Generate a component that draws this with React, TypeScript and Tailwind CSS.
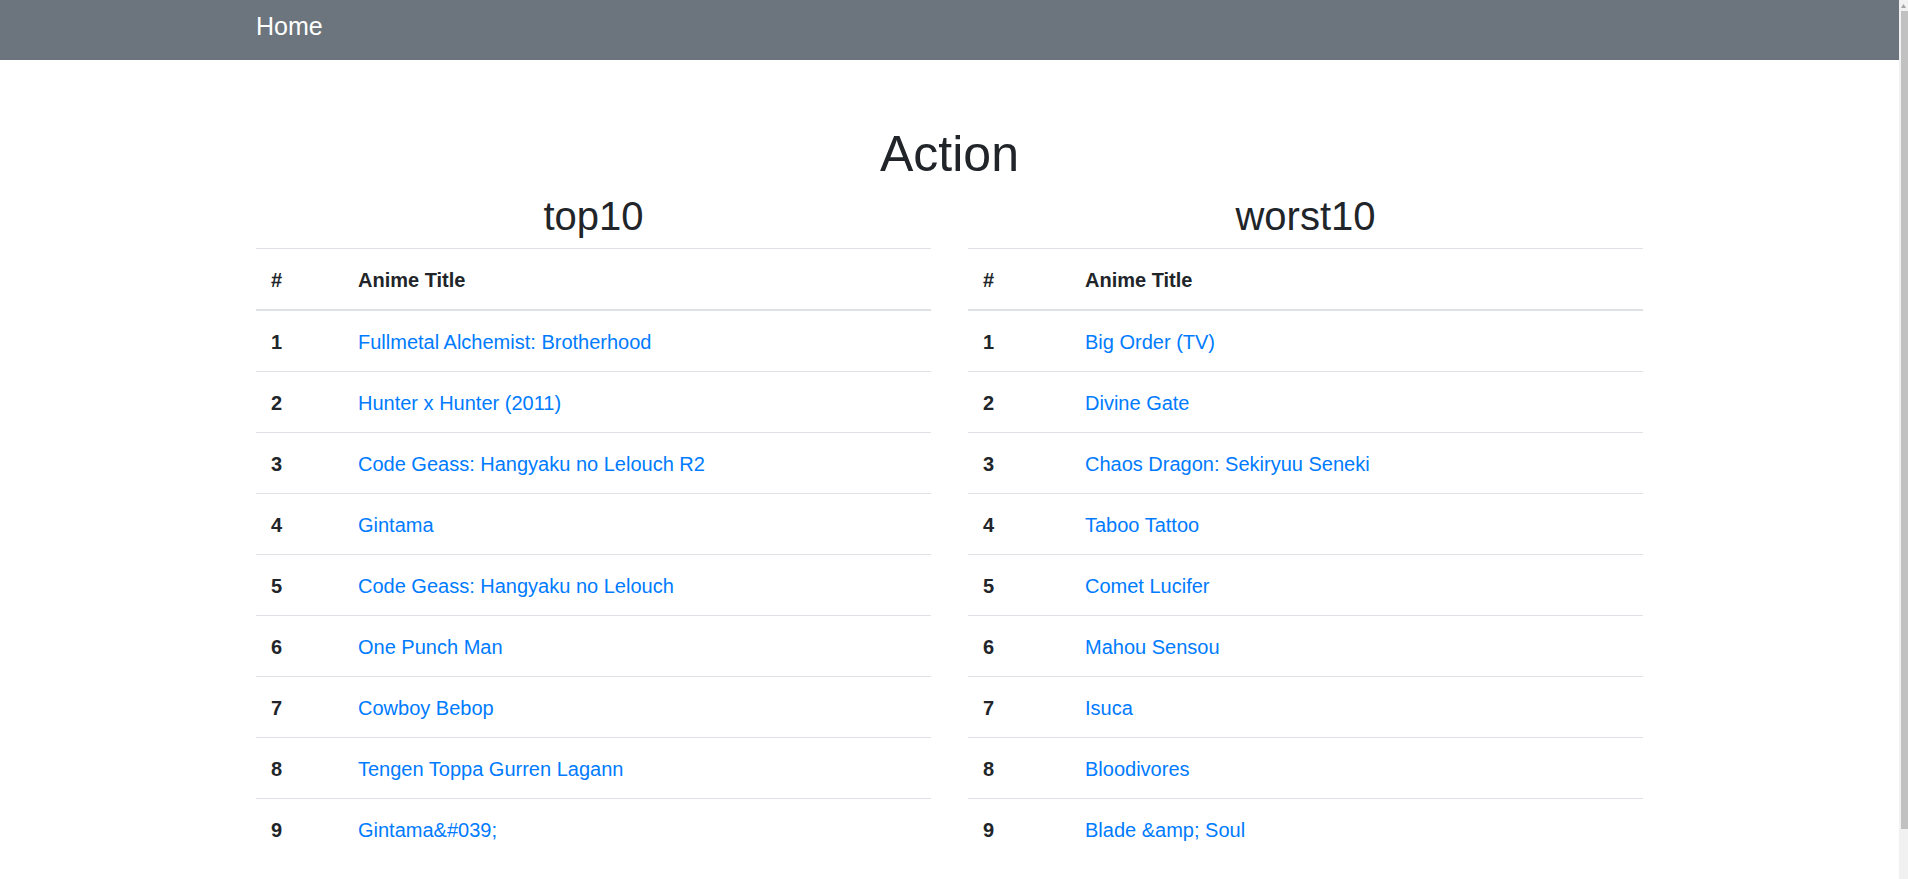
import React from 'react';

const TOP10 = [
    'Fullmetal Alchemist: Brotherhood',
    'Hunter x Hunter (2011)',
    'Code Geass: Hangyaku no Lelouch R2',
    'Gintama',
    'Code Geass: Hangyaku no Lelouch',
    'One Punch Man',
    'Cowboy Bebop',
    'Tengen Toppa Gurren Lagann',
    'Gintama&#039;',
];

const WORST10 = [
    'Big Order (TV)',
    'Divine Gate',
    'Chaos Dragon: Sekiryuu Seneki',
    'Taboo Tattoo',
    'Comet Lucifer',
    'Mahou Sensou',
    'Isuca',
    'Bloodivores',
    'Blade &amp; Soul',
];

interface RankTableProps {
    title: string;
    items: string[];
    firstCol: string;
}

const RankTable: React.FC<RankTableProps> = ({ title, items, firstCol }) => (
    <div>
        <h2 className="text-center text-[40px] leading-[48px] font-medium mb-[8px]">{title}</h2>
        <table className="w-full table-fixed border-collapse text-[20px] leading-[30px]">
            <thead>
                <tr>
                    <th className={`${firstCol} text-left font-bold px-[15px] pt-[16px] pb-[14px] border-t border-b-2 border-[#dee2e6]`}>#</th>
                    <th className="text-left font-bold px-[15px] pt-[16px] pb-[14px] border-t border-b-2 border-[#dee2e6]">Anime Title</th>
                </tr>
            </thead>
            <tbody>
                {items.map((name, i) => (
                    <tr key={i}>
                        <th className="text-left font-bold px-[15px] pt-[16px] pb-[14px] border-t border-[#dee2e6]">{i + 1}</th>
                        <td className="px-[15px] pt-[16px] pb-[14px] border-t border-[#dee2e6]">
                            <a href="#" className="text-[#007bff]">{name}</a>
                        </td>
                    </tr>
                ))}
            </tbody>
        </table>
    </div>
);

export default function App() {
    return (
        <div className="flex h-[879px] overflow-hidden bg-white text-[#212529] font-['Liberation_Sans',Arial,sans-serif]">
            <div className="flex-1 overflow-hidden">
                {/* Navbar */}
                <nav className="h-[60px] bg-[#6c757d]">
                    <div className="w-[1425px] mx-auto px-[19px] pt-[8px]">
                        <a href="#" className="text-white text-[25px] leading-[37px]">Home</a>
                    </div>
                </nav>

                <main className="w-[1425px] mx-auto px-[19px] pt-[64px]">
                    <h1 className="text-center text-[50px] leading-[60px] font-medium mb-[8px]">Action</h1>
                    <div className="grid grid-cols-2 gap-[37px]">
                        <RankTable title="top10" items={TOP10} firstCol="w-[87px]" />
                        <RankTable title="worst10" items={WORST10} firstCol="w-[102px]" />
                    </div>
                </main>
            </div>

            {/* Scrollbar */}
            <div className="w-[9px] bg-[#f1f1f1] flex flex-col">
                <div className="h-[11px] flex items-center justify-center">
                    <svg width="5" height="4" viewBox="0 0 5 4">
                        <path d="M2.5 0 L5 4 L0 4 Z" fill="#a3a3a3" />
                    </svg>
                </div>
                <div className="ml-[2px] h-[818px] bg-[#c1c1c1]" />
            </div>
        </div>
    );
}
